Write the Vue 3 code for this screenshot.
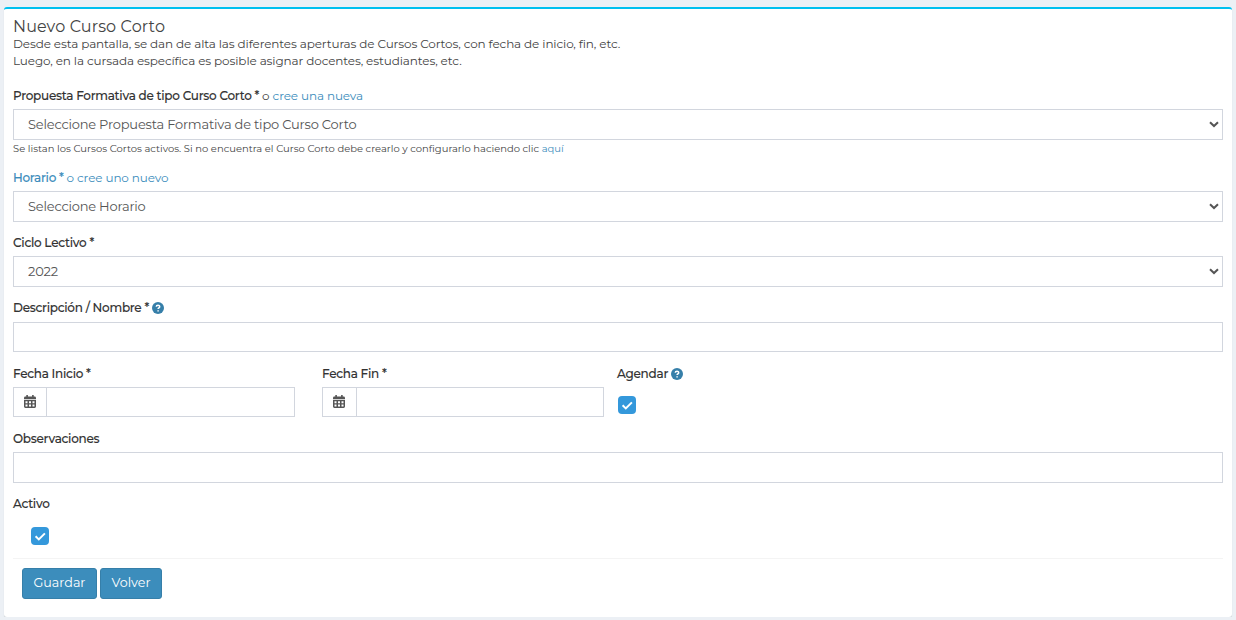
<script setup>
import { ref } from 'vue';

const propuesta = ref('');
const horario = ref('');
const ciclo = ref('2022');
const descripcion = ref('');
const fechaInicio = ref('');
const fechaFin = ref('');
const agendar = ref(true);
const observaciones = ref('');
const activo = ref(true);
</script>

<template>
  <div class="box">
    <form @submit.prevent>
      <h1 class="title">Nuevo Curso Corto</h1>
      <p class="intro">Desde esta pantalla, se dan de alta las diferentes aperturas de Cursos Cortos, con fecha de inicio, fin, etc.</p>
      <p class="intro">Luego, en la cursada específica es posible asignar docentes, estudiantes, etc.</p>

      <div class="form-group first">
        <div class="label"><b>Propuesta Formativa de tipo Curso Corto *</b> o <a href="#">cree una nueva</a></div>
        <div class="select">
          <select v-model="propuesta" class="control">
            <option value="">Seleccione Propuesta Formativa de tipo Curso Corto</option>
          </select>
          <svg class="arrow" viewBox="0 0 10 7"><path d="M1 1.2 L5 5 L9 1.2" /></svg>
        </div>
        <div class="help">Se listan los Cursos Cortos activos. Si no encuentra el Curso Corto debe crearlo y configurarlo haciendo clic <a href="#">aquí</a></div>
      </div>

      <div class="form-group">
        <div class="label"><a href="#"><b>Horario *</b> o cree uno nuevo</a></div>
        <div class="select">
          <select v-model="horario" class="control">
            <option value="">Seleccione Horario</option>
          </select>
          <svg class="arrow" viewBox="0 0 10 7"><path d="M1 1.2 L5 5 L9 1.2" /></svg>
        </div>
      </div>

      <div class="form-group">
        <div class="label"><b>Ciclo Lectivo *</b></div>
        <div class="select">
          <select v-model="ciclo" class="control">
            <option>2022</option>
          </select>
          <svg class="arrow" viewBox="0 0 10 7"><path d="M1 1.2 L5 5 L9 1.2" /></svg>
        </div>
      </div>

      <div class="form-group descripcion">
        <div class="label">
          <b>Descripción / Nombre *</b>
          <svg class="question" viewBox="0 0 12 12"><circle cx="6" cy="6" r="6" /><path d="M4.3 4.8 C4.3 2.7 7.7 2.7 7.7 4.7 C7.7 5.8 6.1 5.8 6.1 7" /><path d="M6.1 8.2 V9.5" /></svg>
        </div>
        <input v-model="descripcion" type="text" class="control short">
      </div>

      <div class="row">
        <div class="fecha">
          <div class="label"><b>Fecha Inicio *</b></div>
          <div class="input-group">
            <span class="addon">
              <svg class="calendar" viewBox="0 0 12 13"><path class="solid" d="M2.3 0h1.6v1.6h4.2V0h1.6v1.6h.9Q12 1.6 12 3v1H0V3Q0 1.6 1.4 1.6h.9zM0 4.8h12v6.8Q12 13 10.6 13H1.4Q0 13 0 11.6z" /><path class="hole" d="M1.5 6.2h2v2h-2zM5 6.2h2v2H5zM8.5 6.2h2v2h-2zM1.5 9.6h2v2h-2zM5 9.6h2v2H5zM8.5 9.6h2v2h-2z" /></svg>
            </span>
            <input v-model="fechaInicio" type="text" class="control short">
          </div>
        </div>
        <div class="fecha fin">
          <div class="label"><b>Fecha Fin *</b></div>
          <div class="input-group">
            <span class="addon">
              <svg class="calendar" viewBox="0 0 12 13"><path class="solid" d="M2.3 0h1.6v1.6h4.2V0h1.6v1.6h.9Q12 1.6 12 3v1H0V3Q0 1.6 1.4 1.6h.9zM0 4.8h12v6.8Q12 13 10.6 13H1.4Q0 13 0 11.6z" /><path class="hole" d="M1.5 6.2h2v2h-2zM5 6.2h2v2H5zM8.5 6.2h2v2h-2zM1.5 9.6h2v2h-2zM5 9.6h2v2H5zM8.5 9.6h2v2h-2z" /></svg>
            </span>
            <input v-model="fechaFin" type="text" class="control short">
          </div>
        </div>
        <div>
          <div class="label">
            <b>Agendar</b>
            <svg class="question" viewBox="0 0 12 12"><circle cx="6" cy="6" r="6" /><path d="M4.3 4.8 C4.3 2.7 7.7 2.7 7.7 4.7 C7.7 5.8 6.1 5.8 6.1 7" /><path d="M6.1 8.2 V9.5" /></svg>
          </div>
          <button type="button" class="check agendar" :class="{ on: agendar }" @click="agendar = !agendar">
            <svg v-if="agendar" viewBox="0 0 18 18"><path d="M4.6 9.3 L7.8 12.4 L13.9 6.4" /></svg>
          </button>
        </div>
      </div>

      <div class="form-group">
        <div class="label"><b>Observaciones</b></div>
        <input v-model="observaciones" type="text" class="control">
      </div>

      <div class="form-group activo">
        <div class="label"><b>Activo</b></div>
        <button type="button" class="check" :class="{ on: activo }" @click="activo = !activo">
          <svg v-if="activo" viewBox="0 0 18 18"><path d="M4.6 9.3 L7.8 12.4 L13.9 6.4" /></svg>
        </button>
      </div>

      <div class="footer">
        <button type="submit" class="btn guardar">Guardar</button>
        <button type="button" class="btn volver">Volver</button>
      </div>
    </form>
  </div>
</template>

<style>
body {
  background: #ecf0f5;
}
</style>

<style scoped>
.box {
  box-sizing: border-box;
  height: 610px;
  margin: 7px 4px 0;
  padding: 9px 9px 0;
  background: #fff;
  border-top: 2px solid #00c0ef;
  border-radius: 3px;
  box-shadow: 0 1px 1px rgba(0, 0, 0, 0.15);
  color: #444;
  font-family: Montserrat, Inter, "Liberation Sans", sans-serif;
  font-size: 12px;
  line-height: 17px;
  letter-spacing: -0.12px;
  white-space: nowrap;
}
a {
  color: #3c8dbc;
  text-decoration: none;
}
.title {
  margin: 0;
  color: #444;
  font-size: 16px;
  font-weight: 400;
  line-height: 17px;
  letter-spacing: 0.12px;
}
.intro {
  margin: 0;
}
.form-group {
  margin-bottom: 13px;
}
.first {
  margin-top: 19px;
}
.label {
  display: flex;
  align-items: center;
  box-sizing: border-box;
  height: 17px;
  margin-bottom: 4px;
  line-height: 15px;
  padding-bottom: 2px;
  white-space: pre;
}
.label b {
  color: #333;
  font-weight: 500;
  letter-spacing: -0.25px;
  -webkit-text-stroke: 0.12px;
}
.label a b {
  color: #3c8dbc;
}
.control {
  display: block;
  box-sizing: border-box;
  width: 100%;
  height: 31px;
  padding: 0 14px;
  background: #fff;
  border: 1px solid #d2d6de;
  border-radius: 0;
  outline: none;
  appearance: none;
  color: #555;
  font: inherit;
  font-size: 13px;
  letter-spacing: -0.2px;
}
.short {
  height: 30px;
}
.select {
  position: relative;
}
.arrow {
  position: absolute;
  top: 12px;
  right: 4px;
  width: 10px;
  height: 7px;
  fill: none;
  stroke: #555;
  stroke-width: 2;
  pointer-events: none;
}
.help {
  font-size: 9.98px;
  letter-spacing: 0;
}
.descripcion {
  margin-bottom: 14px;
}
.descripcion .label {
  margin-bottom: 5px;
}
.question {
  width: 12px;
  height: 12px;
  margin-left: 3px;
  fill: #367fa9;
}
.question path {
  fill: none;
  stroke: #fff;
  stroke-width: 1.5;
}
.row {
  display: flex;
  margin-bottom: 14px;
}
.fecha {
  width: 282px;
  margin-right: 27px;
}
.fin {
  margin-right: 13px;
}
.input-group {
  display: flex;
}
.addon {
  display: flex;
  flex: none;
  align-items: center;
  justify-content: center;
  box-sizing: border-box;
  width: 33px;
  padding-bottom: 2px;
  border: 1px solid #d2d6de;
  border-right: 0;
}
.fin .addon {
  width: 34px;
  padding-right: 1px;
}
.calendar {
  width: 12px;
  height: 13px;
}
.solid {
  fill: #555;
}
.hole {
  fill: #fff;
}
.check {
  display: block;
  box-sizing: border-box;
  width: 18px;
  height: 18px;
  padding: 0;
  background: #fff;
  border: 1px solid #d2d6de;
  border-radius: 4px;
}
.check.on {
  background: #3498db;
  border: 0;
}
.check svg {
  display: block;
  fill: none;
  stroke: #fff;
  stroke-width: 2;
}
.agendar {
  margin: 13px 0 0 1px;
}
.activo {
  margin-bottom: 13px;
}
.activo .check {
  margin: 14px 0 0 18px;
}
.footer {
  display: flex;
  gap: 3px;
  padding: 9px;
  border-top: 1px solid #f4f4f4;
}
.btn {
  box-sizing: border-box;
  height: 31px;
  padding: 0 0 2px;
  background: #3c8dbc;
  border: 1px solid #367fa9;
  border-radius: 3px;
  color: #fff;
  font: inherit;
  font-size: 12.7px;
}
.guardar {
  width: 75px;
}
.volver {
  width: 62px;
}
</style>
